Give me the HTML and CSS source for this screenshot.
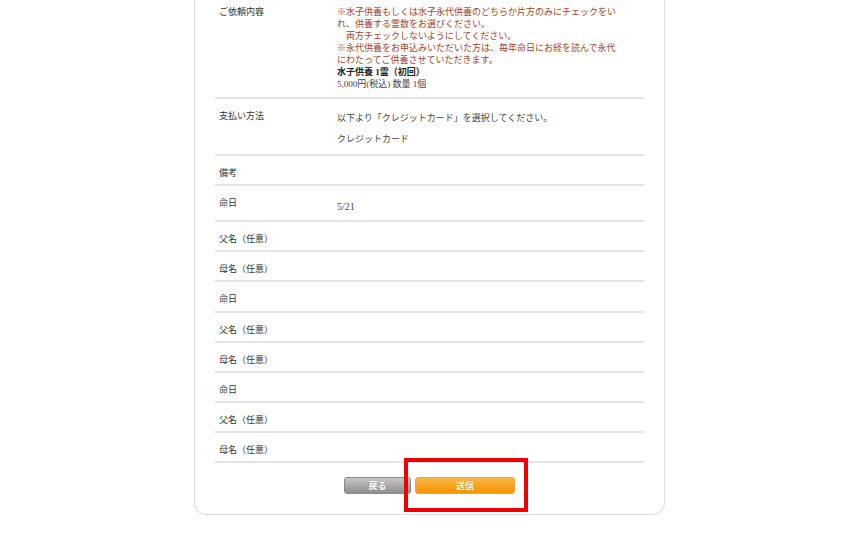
FILE: index.html
```html
<!DOCTYPE html>
<html lang="ja">
<head>
  <meta charset="UTF-8" />
  <meta name="viewport" content="width=device-width, initial-scale=1.0"/>
  <title>ご依頼内容の確認</title>
  <link rel="stylesheet" href="styles.css">
</head>
<body>

  <div class="page">
    <table class="form-table">
      <tr class="row-order">
        <th>ご依頼内容</th>
        <td>
          <p class="note">※水子供養もしくは水子永代供養のどちらか片方のみにチェックをい<br>れ、供養する霊数をお選びください。<br>　両方チェックしないようにしてください。<br>※永代供養をお申込みいただいた方は、毎年命日にお経を読んで永代<br>にわたってご供養させていただきます。</p>
          <p class="item-name">水子供養 1霊（初回）</p>
          <p>5,000円(税込) 数量 1個</p>
        </td>
      </tr>
      <tr class="row-pay">
        <th>支払い方法</th>
        <td>
          <p>以下より「クレジットカード」を選択してください。</p>
          <p class="pay-method">クレジットカード</p>
        </td>
      </tr>
      <tr>
        <th>備考</th>
        <td></td>
      </tr>
      <tr class="row-date">
        <th>命日</th>
        <td>5/21</td>
      </tr>
      <tr><th>父名（任意）</th><td></td></tr>
      <tr><th>母名（任意）</th><td></td></tr>
      <tr><th>命日</th><td></td></tr>
      <tr><th>父名（任意）</th><td></td></tr>
      <tr><th>母名（任意）</th><td></td></tr>
      <tr><th>命日</th><td></td></tr>
      <tr><th>父名（任意）</th><td></td></tr>
      <tr><th>母名（任意）</th><td></td></tr>
    </table>

    <div class="btn-row">
      <button class="btn btn-back">戻る</button>
      <span class="send-wrap">
        <button class="btn btn-send">送信</button>
        <span class="highlight"></span>
      </span>
    </div>
  </div>

</body>
</html>
```

FILE: styles.css
```css
:root {
  --line-color: #e4e4e4;
  --text-color: #333;
  --note-color: #a1432f;
}

body {
  font-family: 'Liberation Serif', 'Noto Sans CJK JP', serif;
  background-color: #fff;
  color: var(--text-color);
  margin: 0;
  padding: 0 9px 0 0;
}

.page {
  width: 471px;
  box-sizing: border-box;
  margin: -4px auto 0;
  padding: 0 20px 20px;
  border: 1px solid #dcdcdc;
  border-top: none;
  border-radius: 0 0 12px 12px;
}

.form-table {
  width: 100%;
  border-collapse: separate;
  border-spacing: 0;
  font-size: 9px;
  line-height: 12px;
}

.form-table th,
.form-table td {
  text-align: left;
  vertical-align: top;
  font-weight: normal;
  padding: 11px 4px 5.15px;
  border-bottom: 2px solid var(--line-color);
}

.form-table th {
  width: 114px;
  color: #333;
}

.form-table td {
  padding-left: 0;
  color: #444;
}

.form-table p {
  margin: 0;
}

.row-order th,
.row-order td {
  padding-top: 10px;
  padding-bottom: 7px;
}

.note {
  color: var(--note-color);
}

.item-name {
  font-weight: bold;
  color: #222;
}

.row-pay td {
  padding-top: 13px;
  padding-bottom: 9px;
}

.row-pay .pay-method {
  margin-top: 9px;
}

.row-date td {
  padding-top: 15px;
  padding-bottom: 7px;
  font-size: 10px;
}

.btn-row {
  display: flex;
  justify-content: center;
  gap: 4px;
  margin-top: 14px;
}

.btn {
  height: 17px;
  box-sizing: border-box;
  padding: 0;
  border-radius: 3px;
  font-family: 'Noto Sans CJK JP', sans-serif;
  font-size: 9px;
  font-weight: bold;
  line-height: 15px;
  color: #fff;
  text-shadow: 0 0 1px rgba(0,0,0,0.25);
  cursor: pointer;
}

.btn-back {
  width: 67px;
  background: linear-gradient(#c8c8c8, #8e8e8e);
  border: 1px solid #8a8a8a;
}

.btn-send {
  width: 100px;
  background: linear-gradient(#fdb54c, #f39400);
  border: 1px solid #f2a43a;
}

.send-wrap {
  position: relative;
  display: flex;
}

.highlight {
  position: absolute;
  left: -11px;
  top: -19px;
  width: 124px;
  height: 54px;
  box-sizing: border-box;
  border: 4px solid #f00000;
}
```
